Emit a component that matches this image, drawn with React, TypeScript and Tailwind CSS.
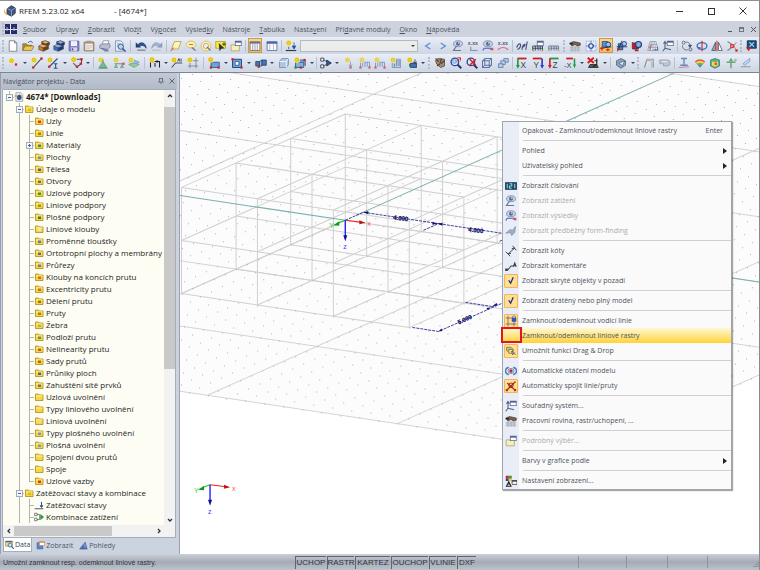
import type { ReactNode } from 'react';
import clsx from 'clsx';

const BLUE = '#2f5597';
const GREY = '#6c7787';
const RED = '#d22020';
const SUN = '#f0cf1c';

const sun = (x = 3.5, y = 3.5) => (
    <g>
        <circle cx={x} cy={y} r="4" fill="#fbf0a0" />
        <circle cx={x} cy={y} r="2.8" fill={SUN} stroke="#b99a10" strokeWidth=".6" />
    </g>
);

const cube = (light: string, mid: string, dark: string) => (
    <g stroke="#3a3a40" strokeWidth=".6">
        <path d="M1 8l6 2v5l-6-2zM5 4V2l5-1 5 2v3" fill={mid} />
        <path d="M7 10l7-2.500V12l-7 3z" fill={dark} />
        <path d="M1 8l5-3 8 2.500L7 10z" fill={light} />
        <path d="M5 3.500 10 5v2L5 5.500zM10 5l5-2v3.500L11 8" fill={dark} />
        <path d="m5 3 5-2 5 2-5 2z" fill={light} />
    </g>
);

const node = (x: number, y: number, color = RED) => <rect x={x - 1.5} y={y - 1.5} width="3" height="3" fill={color} />;

const eye = (y = 6) => (
    <g>
        <ellipse cx="8" cy={y} rx="6" ry="4" fill="#c5d0e2" stroke="#7787a5" />
        <circle cx="8" cy={y} r="2.6" fill="#52699a" />
        <circle cx="9" cy={y - 1} r=".9" fill="#fff" />
    </g>
);

const magnifier = (
    <g fill="none">
        <path d="m10 10 5 5" stroke="#22336e" strokeWidth="2.6" />
        <circle cx="6.5" cy="6.5" r="5" fill="#d9e9fa" stroke="#2e479b" strokeWidth="1.8" />
    </g>
);

const axes = (letter: string, side: string, down: string) => (
    <g>
        <path d="M2 2h12" stroke={side} strokeWidth="2.4" />
        <path d="M2.5 2v9" stroke={down} strokeWidth="2.2" />
        <path d="m0 10.500 2.500 5 2.500-5z" fill={down} />
        <text x="6" y="14" fontSize="11" fill="#3c4452" fontFamily="Liberation Sans, sans-serif">
            {letter}
        </text>
    </g>
);

const folder = (
    <g stroke="#6e6030" strokeWidth=".8">
        <path d="M1 14V5h5l1 2h6v2" fill="#b98c26" />
        <path d="M1 14 4 8h12l-3 6z" fill="#f0c64c" />
        <path d="M8 4c2-3 5-3 6 0" fill="none" stroke="#46536c" strokeWidth="1.300" />
    </g>
);

const windowDialog = (
    <g stroke="#5c6a88" strokeWidth="1">
        <rect x="7" y="1.5" width="8" height="6" fill="#fff" />
        <path d="M7 2.500h8" strokeWidth="2" stroke="#46598c" />
    </g>
);

const beam = (
    <g stroke="#33405e" fill="none">
        <path d="M1 14V8h13v6M4.500 8v6M8 8v6M11 8v6M1 11h13" strokeWidth="1.2" />
        <path d="M1 14h2M13 14h2" stroke="#b9a52c" strokeWidth="2" />
    </g>
);

const icons: Record<string, ReactNode> = {
    newFile: <path d="M3 1h7l3 3v11H3zM10 1v3h3" fill="#fff" stroke="#6d6d74" />,
    open: folder,
    cubeOrange: cube('#f6b765', '#d27a1e', '#6e3d10'),
    cubeBlue: cube('#8fb4f2', '#3e6cc4', '#1d3875'),
    save: (
        <g>
            <path d="M1.500 1.500h13v13h-13z" fill="#8a86cf" stroke="#56539a" />
            <path d="M4 1.500h8V8H4z" fill="#f0f1fa" />
            <path d="M4 10h8v4.500H4z" fill="#d5d6e2" />
            <path d="M5 11h2v3H5z" fill="#56539a" />
        </g>
    ),
    clipboard: (
        <g>
            <rect x="1.5" y="2.5" width="13" height="12" rx="1" fill="#c69b73" stroke="#7d6a5a" />
            <path d="M3 5h10v8.500H3z" fill="#f4f1ec" />
            <path d="M5 1h6v3H5z" fill="#999" />
            <path d="M4 7.500h8M4 9.500h8M4 11.500h6" stroke="#aaa" strokeWidth=".7" />
        </g>
    ),
    print: (
        <g stroke="#686b80" strokeWidth=".8">
            <path d="m4 6 2-5h7l-1 6" fill="#fff" />
            <path d="M1 7 5 5h9l1 4-4 4-10-2z" fill="#b9bdd4" />
            <path d="m3 11 7 1.500 3 2-5 .5z" fill="#8090cf" />
        </g>
    ),
    preview: (
        <g>
            <path d="M2 1h7l3 3v11H2z" fill="#e3edf8" stroke="#7586a4" />
            <path d="M4 5h5M4 7h4M4 9h3" stroke="#7fa1cd" />
            <circle cx="9" cy="9" r="3.5" fill="#b3d5f2" stroke="#39598f" strokeWidth="1.2" />
            <path d="m11.500 11.500 4 4" stroke="#39598f" strokeWidth="2" />
        </g>
    ),
    undo: (
        <g>
            <path d="M4 6c4-4 10-3 11 5-3-4-6-5-9-2" fill={BLUE} stroke="#1f3e79" />
            <path d="M1 3v7h7z" fill="#1f3e79" />
            <path d="M3 13.500h11" stroke="#444" />
        </g>
    ),
    redo: (
        <g>
            <path d="M12 6C8 2 2 3 1 11c3-4 6-5 9-2" fill="#a9b8d2" stroke="#8b9bb9" />
            <path d="M15 3v7H8z" fill="#8b9bb9" />
            <path d="M2 13.500h11" stroke="#aaa" />
        </g>
    ),
    plane: (
        <g>
            <path d="M6 2h9l-4 10H2z" fill="#fcf6b1" stroke="#af963e" />
            <path d="m1 15 4-5" stroke={RED} />
        </g>
    ),
    lasso: (
        <g fill="none">
            <ellipse cx="8" cy="6" rx="6.5" ry="4.5" fill="#fbf3b4" stroke="#c9b250" />
            <path d="M5 6h6" stroke="#c57a48" strokeWidth="1.4" />
            <path d="m9 10 5 4" stroke="#777" strokeWidth="1.5" />
        </g>
    ),
    ring: (
        <g fill="none">
            <circle cx="8" cy="8" r="6.5" stroke="#c9b250" fill="#fdf5b8" />
            <circle cx="8" cy="8" r="3.5" stroke="#c98a50" fill="#eef1f8" />
            <path d="m9 9 5 5" stroke="#777" strokeWidth="1.5" />
        </g>
    ),
    pick: (
        <g>
            <path d="M1 2h13v9H1z" fill="#f7ec3a" stroke="#a99b1a" />
            <path d="m5 4 1 11 2.500-3.500 4-.5z" fill="#333" />
            <path d="M12 3v5M9.500 5.500h5" stroke="#333" strokeWidth="1.2" />
        </g>
    ),
    notes: (
        <g>
            <path d="M1.500 6.500h11v8h-11z" fill="#f5efb4" stroke="#a79f68" />
            {windowDialog}
        </g>
    ),
    table: (
        <g>
            <path d="M1.500 2.500h13v11.500h-13z" fill="#fff" stroke="#5a6174" />
            <path d="M1 3.500h14" stroke="#68718a" strokeWidth="2.5" />
            <path d="M5 4v10M8 4v10M11 4v10" stroke="#7a8297" />
        </g>
    ),
    tableBlue: (
        <g>
            <path d="M1.500 2.500h13v11.500h-13z" fill="#fafbff" stroke="#4d5d88" />
            <path d="M1 3.500h14" stroke="#4d64a5" strokeWidth="3" />
            <path d="M5 4v10M10 4v10" stroke="#8f98ae" strokeWidth=".8" />
        </g>
    ),
    loadCase: (
        <g>
            {sun(5, 4)}
            <path d="M1 14h14" stroke="#333b4c" strokeWidth="1.6" />
            <path d="M12 3v8m-2.500-3 2.500 4 2.500-4z" stroke={BLUE} fill={BLUE} />
            <path d="M5 9v3" stroke="#333b4c" />
        </g>
    ),
    prev: <path d="M11 4 5 8l6 4" fill="none" stroke="#5d94dc" strokeWidth="2" />,
    next: <path d="m5 4 6 4-6 4" fill="none" stroke="#5d94dc" strokeWidth="2" />,
    eyeLoad: (
        <g>
            {eye(5)}
            <path d="m6 8-4 6h10" stroke={GREY} strokeWidth="1.6" fill="none" />
        </g>
    ),
    values: (
        <g>
            <text x="1" y="7" fontSize="7" fontWeight="bold" fill="#555f78" fontFamily="Liberation Sans, sans-serif">
                x.xx
            </text>
            <path d="M5 9v5h9" fill="none" stroke="#8491b0" strokeWidth="1.5" />
        </g>
    ),
    eyeResult: (
        <g>
            {eye(5)}
            <path d="M1 14 3 11h11" stroke="#4c58c6" fill="none" strokeWidth="1.4" />
            <path d="m10 13 5-3v4z" fill="#e04a4a" />
        </g>
    ),
    valuesResult: (
        <g>
            <text x="1" y="7" fontSize="7" fontWeight="bold" fill="#555f78" fontFamily="Liberation Sans, sans-serif">
                x.xx
            </text>
            <path d="M1 13q7-6 14 0" fill="none" stroke="#e06b6b" strokeWidth="1.5" />
        </g>
    ),
    glasses: (
        <g fill="none" stroke="#3e4f7a" strokeWidth="1.5">
            <path d="M1 10c1-4 4-6 5-4s-2 7-4 6M8 13c0-5 3-8 4-7s-3 4-4 3M13 13l2-11" />
        </g>
    ),
    beamDialog: (
        <g>
            {beam}
            {windowDialog}
        </g>
    ),
    beam: <g opacity=".65">{beam}</g>,
    workplane: (
        <g>
            <path d="M1 9h14v6H1z" fill="#dfe3ea" />
            <path d="M1 9.500h14M1 12h14M1 14.500h14M4 9v6M8 9v6M12 9v6" stroke="#8e97a8" strokeWidth=".8" />
            <path d="m1 4 5-2 9 2v3l-4 1-3-2-4 2z" fill="#7a5f4a" stroke="#3c3029" strokeWidth=".8" />
            <path d="M1 4h4v2H1z" fill="#222" />
        </g>
    ),
    snap: (
        <g>
            <path d="M1.500 1.500h13v13h-13z" fill="#e6ebf7" stroke="#8090bd" strokeDasharray="1.5 1.5" />
            <path d="M8 1v14M1 8h14" stroke="#5068b0" />
            <circle cx="8" cy="8" r="3" fill="#dfe8ff" stroke="#2442a0" strokeWidth="1.5" />
        </g>
    ),
    objSnap: (
        <g>
            <path d="M3 2h7v7H3z" fill="#5d92d2" stroke="#23457f" />
            <circle cx="11" cy="6" r="3.2" fill="#9cc6f2" stroke="#23457f" strokeWidth="1.3" />
            <path d="M1 11 15 9" stroke="#1d3468" strokeWidth="1.5" />
            <path d="M0 11h5M2.500 9v5M8 13h5M10.500 11v4" stroke={RED} strokeWidth="1.5" />
        </g>
    ),
    objSnap2: (
        <g>
            <path d="M3 5h6v8H3z" fill="#4e7bb8" stroke="#1c355f" />
            <circle cx="11" cy="5" r="3" fill="#a9cdf2" stroke="#23457f" strokeWidth="1.3" />
            <path d="M2 15 8 1M1 9h14" stroke="#1c355f" strokeWidth="1.2" />
            {node(3, 12)}
        </g>
    ),
    objSnap3: (
        <g>
            <path d="M2 4h8v8H2z" fill="#b7232b" stroke="#1c355f" />
            <circle cx="10" cy="6" r="4" fill="#86aedd" stroke="#1b3a78" strokeWidth="1.5" />
            <path d="M7 12v3M5 14h5M2 3v8" stroke="#b7232b" strokeWidth="1.8" />
        </g>
    ),
    gridTilt: (
        <g>
            <path d="M4 2h8l3 12H1z" fill="#e7ebf2" stroke="#8c95a6" />
            <path d="M8 2v12M3 6h10M2 10h12M6 2 4.500 14M10 2l1.500 12" stroke="#8c95a6" strokeWidth=".8" />
            <path d="M4 13V8h3" stroke={RED} fill="none" />
            <path d="M9 13h5V9" stroke={BLUE} fill="none" />
        </g>
    ),
    coordDialog: (
        <g>
            <path d="M4 3v8l-3 4M4 11l8 2M2 5l2-3 2 3" fill="none" stroke="#566486" strokeWidth="1.5" />
            {windowDialog}
        </g>
    ),
    moveCopy: (
        <g fill="none" stroke="#444c5c">
            <circle cx="3.5" cy="3.5" r="2" />
            <circle cx="12.5" cy="12.5" r="2" />
            <path d="M6 3c4-1 7 2 6 6M2 7c0 5 3 7 7 6" />
            <path d="m10 7 2 3 2-3z" fill="#444c5c" />
        </g>
    ),
    rotate: (
        <g fill="none">
            <ellipse cx="8" cy="8" rx="6.5" ry="4.5" stroke="#3f6fc4" strokeWidth="1.8" />
            <path d="M8 1v14" stroke={RED} strokeWidth="1.4" />
            <path d="m2 9 2 4 3-3z" fill="#3f6fc4" />
        </g>
    ),
    mirror: (
        <g>
            <path d="M6 3v11H1z" fill="#9ca3b2" stroke="#4b5261" />
            <path d="M10 3v11h5z" fill="#fff" stroke="#4b5261" />
            <path d="M8 1v14" stroke={RED} strokeWidth="1.4" />
        </g>
    ),
    connect: (
        <g>
            <path d="m2 2 9 6-9 6" stroke="#7e8799" strokeWidth="1.6" fill="none" />
            <path d="m10 8 4-5M10 8l4 6" stroke="#c58a8a" strokeWidth="1.4" />
            <path d="M6 6h4v4H6z" fill="#e98282" stroke={RED} />
            {node(14, 14)}
        </g>
    ),
    exportX: (
        <g>
            <path d="M3 1h12v10H3z" fill="#1f4c83" stroke="#123" />
            <path d="m6 3 6 6m0-6L6 9" stroke="#8fd0f0" strokeWidth="1.5" />
            <path d="m1 10 4 5 3-5z" fill={RED} />
        </g>
    ),
    addNode: (
        <g>
            {sun(6, 5)}
            {node(12, 10)}
        </g>
    ),
    addLine: (
        <g>
            <path d="M3 14 14 2" stroke="#333b4c" strokeWidth="1.4" />
            {sun(4, 4)}
            {node(3, 14)}
            {node(14, 2)}
        </g>
    ),
    addMember: (
        <g>
            <path d="M3 13 14 2" stroke={BLUE} strokeWidth="1.6" />
            {sun(4, 4)}
            {node(3, 13)}
            <path d="M9 9h5M9 15h5M11.500 9v6" stroke={BLUE} strokeWidth="1.5" />
        </g>
    ),
    addPoly: (
        <g>
            <path d="M7 3h7v6l-6 4-5-5" fill="none" stroke="#444c5c" strokeWidth="1.4" />
            {sun(3.5, 3.5)}
            {node(14, 3)}
            {node(13, 9)}
            {node(8, 13)}
        </g>
    ),
    nodeSupport: (
        <g opacity=".75">
            {sun(5, 4)}
            <path d="m8 6 5 8H3z" fill="#59b06c" stroke="#37794a" />
            <path d="M2 15h12M8 3v4" stroke="#37794a" strokeWidth="1.2" />
        </g>
    ),
    lineSupport: (
        <g opacity=".75">
            {sun(4, 4)}
            <path d="M2 9h12" stroke={GREY} strokeWidth="1.5" />
            <path d="m4 10 2 4H2zM12 10l2 4h-4z" fill="#7bbf88" stroke="#4a8a58" />
            {node(14, 9)}
        </g>
    ),
    surfSupport: (
        <g opacity=".8">
            <path d="M1 7 8 4l7 3-7 4z" fill="#7db6ea" stroke="#5d88b8" />
            <path d="m1 10 7 4 7-4-7-2z" fill="#7fc98a" stroke="#5d9b68" />
            {sun(4, 4)}
        </g>
    ),
    dimension: (
        <g>
            <path d="M2 14V6h12v8M8 8v5" stroke="#222" strokeWidth="1.4" fill="none" />
            <path d="m2 6 4-2v4zM14 6l-4-2v4z" fill="#222" />
            {sun(4, 3.5)}
        </g>
    ),
    comment: (
        <g>
            {sun(4, 4)}
            <path d="m1 14 5-6h9" stroke="#444c5c" fill="none" strokeWidth="1.4" />
            <path d="m9 6 1.500-4L12 6M13.500 2v4" stroke="#333" fill="none" strokeWidth="1.1" />
        </g>
    ),
    guide: (
        <g>
            <path d="M4 1v14M12 1v14M1 5h14M1 12h14" stroke="#6d7687" />
            {sun(4, 4)}
        </g>
    ),
    surface: (
        <g>
            <path d="M4 7h11v7H4z" fill="#6da3dc" stroke="#24487f" />
            {sun(3.5, 3.5)}
            {node(14, 14)}
            {node(4, 14)}
        </g>
    ),
    opening: (
        <g>
            <path d="M2 3h12v11H2z" fill="#6da3dc" stroke="#24487f" strokeWidth="1.3" />
            <path d="M5.500 6h5v5h-5z" fill="#fff" stroke="#24487f" />
            {node(2, 3)}
            {node(14, 14)}
        </g>
    ),
    solid: (
        <g>
            <path d="M1 6h5v6H1zM9 4h6v7H9z" fill="#4778b6" stroke="#1c3864" />
            <path d="m6 6 3-2v8H6z" fill="#9cc4ea" stroke="#1c3864" />
            {node(5, 13)}
        </g>
    ),
    sheet: (
        <g>
            <path d="m2 6 3-4h9v8l-3 4H2z" fill="#b1c6e2" stroke="#7286a8" />
            <path d="M2 6h9l3-4M11 6v8" fill="none" stroke="#fff" />
        </g>
    ),
    solidAdd: (
        <g>
            <path d="M2 7h11v7H2zM5 4h10v8" fill="#7fb0e2" stroke="#24487f" />
            {sun(4, 4)}
            {node(14, 4)}
            {node(9, 14)}
            {node(2, 14, '#2e8b3d')}
        </g>
    ),
    combine: (
        <g fill="none" stroke="#333b4c" strokeWidth="1.2">
            <path d="M1 1.500h4v4H1zM1 10.500h4v4H1zM5 3.500l5 4M5 12.500l5-4" fill="#fff" />
            <path d="m9 4 6 4-6 4z" fill={BLUE} />
        </g>
    ),
    nodalLoad: (
        <g opacity=".65">
            {sun(6, 4)}
            <path d="M10 6v7m-2-3 2 4 2-4" stroke="#5572b5" fill="none" />
            {node(10, 14)}
        </g>
    ),
    memberLoad: (
        <g opacity=".65">
            <path d="M2 14V7h12v7M5 7v6M8 7v6M11 7v6" stroke="#5572b5" fill="none" strokeWidth="1.3" />
            {sun(4, 4)}
            {node(2, 14)}
            {node(14, 14)}
        </g>
    ),
    imperfection: (
        <g opacity=".8">
            <path d="M3 3h11v11H3z" fill="#b8cce8" stroke="#5f7496" />
            <path d="M6 9v4M9 4v8M12 4v8" stroke="#45608f" strokeWidth="1.2" />
            {sun(4, 4)}
        </g>
    ),
    loadGen: (
        <g>
            <path d="M6 8h8v6H6z" fill="#3e6fb4" stroke="#1c3864" />
            <path d="M12 3v5m-2-2 2 3 2-3" stroke="#333" fill="none" />
            <path d="M5 9v4" stroke="#2e8b3d" strokeWidth="2" />
            {sun(5, 4)}
        </g>
    ),
    pan: (
        <g>
            <path d="m2 5 3-3 9 1v9l-5 2-5-4z" fill="#a58970" stroke="#4e4036" />
            <path d="m2 2 4 4M10 2 8 8m6-3-5 4M4 12l4-3" stroke="#4e4036" strokeWidth="1.5" />
        </g>
    ),
    zoomWindow: (
        <g>
            {magnifier}
            <path d="M4 4h4v4H4z" fill="none" stroke="#5e80c4" />
            <path d="M10 1h4v4M13 2l-4 4" fill="none" stroke={RED} strokeWidth="1.2" />
        </g>
    ),
    zoomAll: (
        <g>
            {magnifier}
            <path d="m5 3 8 8M13 3l-8 8" stroke={RED} strokeWidth="2" />
        </g>
    ),
    wireCube: (
        <path d="M2 5h9v9H2zM5 2h9v9H5zM2 5l3-3M11 5l3-3M2 14l3-3M11 14l3-3" fill="none" stroke="#4e679e" strokeWidth="1.2" />
    ),
    cubes: (
        <g fill="#b9cbe8" stroke="#5a71a1">
            <path d="M9 2h6v5H9z" />
            <path d="M5 5h6v5H5z" />
            <path d="M2 9h6v5H2z" />
        </g>
    ),
    viewX: axes('X', RED, '#1f9d3a'),
    viewY: (
        <g>
            <path d="M1 2h12" stroke={RED} strokeWidth="2.4" />
            <path d="M13.500 2v9" stroke="#2a3fc0" strokeWidth="2.2" />
            <path d="m11 10.500 2.500 5 2.500-5z" fill="#2a3fc0" />
            <text x="2" y="14" fontSize="11" fill="#3c4452" fontFamily="Liberation Sans, sans-serif">
                Y
            </text>
        </g>
    ),
    viewZ: axes('Z', '#1f9d3a', RED),
    viewNegX: (
        <g>
            <path d="M14 2v9" stroke="#1f9d3a" strokeWidth="2" />
            <path d="M12 10h4l-2 5z" fill="#1f9d3a" />
            <path d="M3 2h9" stroke={RED} strokeWidth="2.4" />
            <text x="0" y="14" fontSize="10" fill="#3c4452" fontFamily="Liberation Sans, sans-serif">
                -X
            </text>
        </g>
    ),
    hide: (
        <g>
            <path d="M4 10h9l2 4H2z" fill="#555" stroke="#222" />
            <path d="M13 2v8l-5 3M10 5h4" stroke="#222" strokeWidth="1.5" fill="none" />
            <path d="m1 1 8 7m0-7L1 8" stroke="#e01818" strokeWidth="2.6" />
        </g>
    ),
    render: (
        <g>
            <path d="m2 5 6-3 6 3v6l-6 4-6-4z" fill="#8ba3c2" stroke="#4c5c75" />
            <path d="m5 8 5 4 3-7z" fill="#dfe7f1" stroke="#4c5c75" />
        </g>
    ),
    deform: (
        <g fill="none" opacity=".8">
            <path d="M2 14 5 3h9v11" stroke="#8a93a3" strokeWidth="1.3" />
            <path d="M5 4q5 3 9-1" stroke="#c75f5f" />
            <path d="M2 14 5 5M12 14V6" stroke="#3c9a4f" />
        </g>
    ),
    force: (
        <g opacity=".7">
            <path d="M1 4h10a4 4 0 0 1 0 8H6V9H1z" fill="#b5bcc9" stroke="#737c8c" />
            <path d="M4 6h7" stroke="#fff" />
        </g>
    ),
    sectionI: (
        <g>
            <path d="M4 2h8M8 2v9M3 11h10" stroke="#6387c6" strokeWidth="1.8" />
            <path d="m1 14 14-1" stroke="#d65c5c" />
        </g>
    ),
    rainbow: (
        <g>
            <path d="M1 6q7-6 14 0l-7 8z" fill="#e65353" />
            <path d="M2.500 7q5.500-4 11 0L8 13z" fill="#f4dd3e" />
            <path d="M4 9q4-3 8 0l-4 5z" fill="#55bd58" />
            <path d="M5 11q3-2 6 0l-3 3z" fill="#4c8fd8" />
        </g>
    ),
    solidResult: (
        <g>
            <path d="m2 4 6-2 6 2v8l-6 3-6-3z" fill="#5bb86a" stroke="#3a6cb0" />
            <path d="m4 6 4 1 4-1v5l-4 2-4-2z" fill="#f3dc48" />
            <circle cx="9" cy="9" r="2" fill="#e25a3c" />
        </g>
    ),
    reaction: (
        <g>
            <path d="M8 15V6M2 7h12" stroke="#66a86f" strokeWidth="2" />
            <path d="m8 1 3 5H5z" fill="#66a86f" />
            {node(14, 4, '#8dbf94')}
        </g>
    ),
    section: (
        <g>
            <path d="M4 9 13 2v4L6 11z" fill="#c9d9f0" stroke="#6f93cf" />
            <path d="M1 13h13" stroke="#8c95a6" strokeWidth="1.3" />
        </g>
    ),
    numbering: (
        <g>
            <path d="M.5 3.500h15v9H.5z" fill="#1f4a63" stroke="#10293a" />
            <path d="M3 5v6M6 5h3v3H6v3h3M13 5v6" stroke="#8fd3ec" fill="none" strokeWidth="1.4" />
        </g>
    ),
    formFinding: (
        <g opacity=".8">
            <path d="m1 11 6-5 3 1 4-5-1 8-4 4-2-4z" fill="#8d9db8" stroke="#6a7c9a" />
        </g>
    ),
    dims: (
        <g stroke="#3b4350" fill="none" strokeWidth="1.3">
            <path d="M4 12 13 4" />
            <path d="m1 9 6 6M10 1l5 6M4 12l4-1M13 4l-4 1" />
        </g>
    ),
    comments: (
        <g stroke="#3b4350" fill="none" strokeWidth="1.4">
            <path d="M1 13h3l4-5h3" />
            <path d="m11 9 2-5 2 5M12 7.500h2" />
            <path d="M1 12h2v2H1z" fill="#222" />
        </g>
    ),
    check: <path d="m5 7 2.500 4L11 3" fill="none" stroke="#1b2a86" strokeWidth="1.7" />,
    guideLock: (
        <g>
            <path d="M4 1v14M1 4h14M1 12h14M12 8v7" stroke="#6f6656" strokeWidth="1.1" />
            <path d="M9 4h6v5H9z" fill="#2f55b8" />
            <path d="M10 4V2q2-2 4 0v2" fill="none" stroke="#53699c" />
        </g>
    ),
    dragDrop: (
        <g>
            <path d="M2 3h6l3 3v4H5L2 7z" fill="#c9c06c" stroke="#77723e" />
            <path d="M5 6h5v5H5z" fill="#e9e3a0" stroke="#77723e" />
            <path d="m9 8 5 5m-5-5 1 5 3-3" stroke="#333" fill="#fff" />
        </g>
    ),
    autoRotate: (
        <g fill="none">
            <path d="M5 3C-1 5-1 11 5 13M11 3c6 2 6 8 0 10" stroke="#4e7bb8" strokeWidth="2" />
            <ellipse cx="8" cy="8" rx="4" ry="3.5" fill="#cfe0f4" stroke="#5b82bb" />
            <circle cx="8" cy="8" r="2.2" fill={RED} />
        </g>
    ),
    autoConnect: (
        <g fill="none">
            <path d="M2 14 14 2M3 4l11 10" stroke="#b22a1c" strokeWidth="1.7" />
            <circle cx="8" cy="7" r="3" stroke="#7a2a1c" strokeWidth="1.2" />
            {node(2.5, 13.5)}
            {node(13.5, 13.5)}
        </g>
    ),
    displaySettings: (
        <g>
            <path d="M1 1h4v4H1z" fill={RED} />
            <path d="M5 1h4v4H5z" fill="#2e9c3c" />
            <path d="M1 5h4v3H1z" fill="#2a3fc0" />
            <path d="M5 5h4v3H5z" fill={SUN} />
            <path d="M2 15 5 9l3 6zM3 12h4" fill="none" stroke="#222" strokeWidth="1.4" />
            <path d="M9.500 7.500H16v5H9.500z" fill="#fff" stroke="#333" />
            <path d="M9 8h7" stroke="#333" strokeWidth="1.6" />
        </g>
    ),
    appLogo: (
        <g>
            <path d="m4 5 6-4 5 3v7l-5 4-6-3z" fill="#40557f" stroke="#1f2b45" />
            <path d="m4 5 6 2 5-3M10 7v8" fill="none" stroke="#9db0d5" />
            <path d="M1 4c0 5 1 7 4 8l-1 2-4-4 1-6z" fill="#e2b13a" />
        </g>
    ),
    modelDoc: (
        <g>
            <path d="M3 1h8l3 3v11H3z" fill="#e8ecf4" stroke="#7b879f" />
            <path d="m5 6 4-2 3 2v5l-4 2-3-2z" fill="#3c5080" />
            <path d="M1 5h4v3H1z" fill="#cfb04a" />
        </g>
    ),
    loadCases: (
        <g>
            <path d="M1 14h14" stroke="#333" strokeWidth="1.3" />
            <path d="M12 3v8m-2-2 2 3 2-3z" stroke={BLUE} fill={BLUE} strokeWidth="1.6" />
        </g>
    ),
    loadCombos: (
        <g fill="none" stroke="#444">
            <path d="M1 2h4v4H1zM1 10h4v4H1zM5 4h4v8H5" />
            <path d="m10 3 6 5-6 5z" fill="#1f9d3a" stroke="none" />
        </g>
    ),
    tabData: (
        <g>
            <path d="M1 2h12v9H1z" fill="#f2dc86" stroke="#8d7a2d" />
            <path d="M1 3h12" stroke={BLUE} strokeWidth="2" />
            <circle cx="9" cy="9" r="3.5" fill="#cfe2f8" stroke={BLUE} strokeWidth="1.3" />
            <path d="m11.500 11.500 4 4" stroke={BLUE} strokeWidth="2" />
        </g>
    ),
    tabShow: (
        <g>
            <path d="M2 3h10v11H2z" fill="#5a86c8" stroke="#2f5597" />
            <path d="M6 1h9v7H6z" fill="#fff" stroke="#c97f3a" />
            <path d="M6 2h9" stroke="#c97f3a" strokeWidth="2" />
        </g>
    ),
    tabViews: (
        <g>
            <path d="M2 13 11 2l3 11z" fill="#6a93d2" stroke="#2f5597" />
            <path d="M1 14h14M7 8v5" stroke="#2f3f77" strokeWidth="1.4" />
        </g>
    ),
};

interface IconProps {
    name: string;
    className?: string;
}

function Icon({ name, className = 'size-3.5' }: IconProps) {
    return (
        <svg viewBox="0 0 16 16" className={clsx('shrink-0', className)} aria-hidden="true">
            {icons[name]}
        </svg>
    );
}

interface ToolGroupProps {
    items: string;
    className: string;
    active?: string;
}

// Items are icon names; "v" stands for the small drop-down arrow
function ToolGroup({ items, className, active }: ToolGroupProps) {
    return (
        <div className={clsx('flex h-full shrink-0 items-center justify-between', className)}>
            {items.split(' ').map((name, i) =>
                name === 'v' ? (
                    <button key={i} aria-label="More" className="flex w-[5px] justify-center">
                        <svg viewBox="0 0 4 2" className="h-[2px] w-1">
                            <path d="M0 0h4L2 2z" fill="#3c4352" />
                        </svg>
                    </button>
                ) : (
                    <button
                        key={i}
                        aria-label={name}
                        className={clsx(
                            'flex h-[15px] w-3.5 items-center justify-center',
                            name === active && 'bg-gradient-to-b from-[#fbd79a] to-[#f8b84e] outline outline-1 -outline-offset-1 outline-[#c99a4e]'
                        )}
                    >
                        <Icon name={name} className="size-3" />
                    </button>
                )
            )}
        </div>
    );
}

function Sep({ className = 'mx-[2px]' }: { className?: string }) {
    return <div className={clsx('h-3 w-px shrink-0 bg-[#b9c1d0]', className)} />;
}

function Grip({ className = 'mx-[2px]' }: { className?: string }) {
    return <div className={clsx('h-3 w-[3px] shrink-0 border-l-2 border-dotted border-[#b3bccb]', className)} />;
}

function TitleBar() {
    return (
        <header className="flex h-[21px] items-center border-t border-[#8f8f8f] bg-white pl-1 text-[8px] text-[#1c1c1c]">
            <Icon name="appLogo" className="size-3" />
            <h1 className="ml-[3px] w-[95px]">RFEM 5.23.02 x64</h1>
            <span>- [4674*]</span>
            <div className="ml-auto flex items-center">
                <button aria-label="Minimize" className="flex w-8 justify-center">
                    <span className="h-px w-[7px] bg-[#333]" />
                </button>
                <button aria-label="Maximize" className="flex w-8 justify-center">
                    <span className="size-[7px] border border-[#333]" />
                </button>
                <button aria-label="Close" className="flex w-8 justify-center">
                    <svg viewBox="0 0 8 8" className="size-2">
                        <path d="m.5.5 7 7m0-7-7 7" stroke="#333" />
                    </svg>
                </button>
            </div>
        </header>
    );
}

// An underscore marks the access key
const menus = [
    '_Soubor',
    'Úpra_vy',
    '_Zobrazit',
    'Vlož_it',
    'Vý_počet',
    'Výsled_ky',
    'Nástroje',
    '_Tabulka',
    'Nasta_vení',
    'Pří_davné moduly',
    '_Okno',
    '_Nápověda',
];

function MenuBar() {
    return (
        <nav className="flex h-4 items-center bg-[#cdd2de] pl-[2px] text-[7px] text-[#4b5260]">
            <Grip className="" />
            <svg viewBox="0 0 12 10" className="h-[10px] w-3">
                <path d="M0 0h12v10H0z" fill="#252f66" />
                <path d="M0 5.500h12M5.500 0v10" stroke="#e6e9f4" />
                <path d="M2 3v4M9 3v4" stroke="#b9c1de" />
            </svg>
            <div className="ml-[6px] flex gap-[9px]">
                {menus.map((label) => {
                    const at = label.indexOf('_');
                    return (
                        <button key={label}>
                            {at < 0 ? (
                                label
                            ) : (
                                <>
                                    {label.slice(0, at)}
                                    <span className="underline underline-offset-1">{label[at + 1]}</span>
                                    {label.slice(at + 2)}
                                </>
                            )}
                        </button>
                    );
                })}
            </div>
            <div className="ml-auto flex items-center gap-[7px] pr-[3px]">
                <button aria-label="Minimize document" className="mt-1 h-px w-1 bg-[#555]" />
                <button aria-label="Restore document" className="size-[5px] border border-t-2 border-[#777]" />
                <button aria-label="Close document">
                    <svg viewBox="0 0 5 5" className="size-[5px]">
                        <path d="m0 0 5 5m0-5L0 5" stroke="#555" />
                    </svg>
                </button>
            </div>
        </nav>
    );
}

function Toolbars() {
    const bar = 'flex h-[17px] items-center bg-gradient-to-b from-[#e9eef7] to-[#ced6e4] pl-[2px]';
    return (
        <div className="border-b border-[#7c8492] bg-[#d3dae7] pb-px">
            <div className={bar}>
                <Grip className="mr-px" />
                <ToolGroup className="w-[121px]" items="newFile open cubeOrange cubeBlue save clipboard print preview" />
                <Sep className="mx-[3px]" />
                <ToolGroup className="w-[30px]" items="undo redo" />
                <Sep />
                <ToolGroup className="w-[74px]" items="plane lasso ring pick notes" />
                <Sep />
                <ToolGroup className="w-[31px]" items="table tableBlue" active="table" />
                <Sep />
                <ToolGroup className="w-[14px]" items="loadCase" />
                <div className="relative ml-[2px] w-[118px] shrink-0">
                    <select
                        aria-label="Load case"
                        className="block h-3 w-full appearance-none border border-[#b5b9c0] bg-[#ececec] text-[8px]"
                    >
                        <option></option>
                    </select>
                    <svg viewBox="0 0 4 2" className="pointer-events-none absolute top-[5px] right-[3px] h-[2px] w-1">
                        <path d="M0 0h4L2 2z" fill="#3c4352" />
                    </svg>
                </div>
                <ToolGroup className="ml-[3px] w-[89px]" items="prev next eyeLoad values eyeResult valuesResult" />
                <Sep />
                <ToolGroup className="w-[46px]" items="glasses beamDialog beam" />
                <Grip />
                <ToolGroup
                    className="w-[107px]"
                    items="workplane snap objSnap objSnap2 objSnap3 gridTilt coordDialog"
                    active="objSnap"
                />
                <Sep />
                <ToolGroup className="w-[59px]" items="moveCopy rotate mirror connect" />
                <Grip className="mx-px" />
                <ToolGroup className="w-[14px]" items="exportX" />
            </div>
            <div className={bar}>
                <Grip className="mr-px" />
                <ToolGroup className="w-[85px]" items="addNode v addLine addMember v addPoly v" />
                <Sep />
                <ToolGroup className="w-[45px]" items="nodeSupport lineSupport surfSupport" />
                <Sep className="mx-[3px]" />
                <ToolGroup className="w-[52px]" items="dimension v comment guide" />
                <Sep className="mx-[3px]" />
                <ToolGroup className="w-[107px]" items="surface v opening v solid v sheet solidAdd v" />
                <Sep />
                <ToolGroup
                    className="w-[107px]"
                    items="combine v nodalLoad memberLoad memberLoad imperfection loadGen v"
                />
                <Grip />
                <ToolGroup className="w-[77px]" items="pan zoomWindow zoomAll wireCube cubes" />
                <Sep />
                <ToolGroup className="w-[92px]" items="viewX viewY viewZ viewNegX v hide v" />
                <Sep className="mx-[3px]" />
                <ToolGroup className="w-[21px]" items="render v" />
                <Grip />
                <ToolGroup className="w-[30px]" items="deform force" />
                <Sep />
                <ToolGroup className="w-[76px]" items="sectionI rainbow solidResult reaction section" />
            </div>
        </div>
    );
}

interface TreeItem {
    label: string;
    icon?: string;
    mark?: string;
}

const modelData: TreeItem[] = [
    { label: 'Uzly', mark: '#d22020' },
    { label: 'Linie', mark: '#a07010' },
    { label: 'Materiály', mark: '#2e7d5b' },
    { label: 'Plochy', mark: '#4c86c8' },
    { label: 'Tělesa', mark: '#2f5597' },
    { label: 'Otvory', mark: '#57606e' },
    { label: 'Uzlové podpory', mark: '#1f8a3a' },
    { label: 'Liniové podpory', mark: '#8a8a1e' },
    { label: 'Plošné podpory', mark: '#1f6a3a' },
    { label: 'Liniové klouby', mark: '#e8e8f4' },
    { label: 'Proměnné tloušťky', mark: '#3d6fb4' },
    { label: 'Ortotropní plochy a membrány', mark: '#5a4fa8' },
    { label: 'Průřezy', mark: '#6a62b8' },
    { label: 'Klouby na koncích prutu', mark: '#c05a20' },
    { label: 'Excentricity prutu', mark: '#c05a20' },
    { label: 'Dělení prutu', mark: '#8a6a10' },
    { label: 'Pruty', mark: '#a07010' },
    { label: 'Žebra', mark: '#a9a58a' },
    { label: 'Podloží prutu', mark: '#4a8a4a' },
    { label: 'Nelinearity prutu', mark: '#c04a20' },
    { label: 'Sady prutů', mark: '#a05010' },
    { label: 'Průniky ploch', mark: '#2f5597' },
    { label: 'Zahuštění sítě prvků', mark: '#57606e' },
    { label: 'Uzlová uvolnění' },
    { label: 'Typy liniového uvolnění' },
    { label: 'Liniová uvolnění', mark: '#e8d9a0' },
    { label: 'Typy plošného uvolnění', mark: '#5b8fd0' },
    { label: 'Plošná uvolnění', mark: '#5b8fd0' },
    { label: 'Spojení dvou prutů' },
    { label: 'Spoje' },
    { label: 'Uzlové vazby', mark: '#d22020' },
];

const loadData: TreeItem[] = [
    { label: 'Zatěžovací stavy', icon: 'loadCases' },
    { label: 'Kombinace zatížení', icon: 'loadCombos' },
];

function FolderIcon({ mark }: { mark?: string }) {
    return (
        <svg viewBox="0 0 10 10" className="size-[10px] shrink-0" aria-hidden="true">
            <path d="M1.500 2h3l1 1h3.500v5.500H1.500z" fill="#f7d73c" stroke="#ac8c18" strokeWidth=".8" />
            <path d="M2 4h6.500" stroke="#fff3a6" />
            {mark && <path d="M4 4.500h3v2.500H4z" fill={mark} opacity=".85" />}
        </svg>
    );
}

// 10x12 cell of the connector lines; d is the path of the guide
function Guide({ d }: { d?: string }) {
    return (
        <svg viewBox="0 0 10 12" className="h-3 w-[10px] shrink-0" shapeRendering="crispEdges" aria-hidden="true">
            {d && <path d={d} fill="none" stroke="#b4b4ae" />}
        </svg>
    );
}

function Expander({ open, first }: { open: boolean; first?: boolean }) {
    return (
        <button aria-label={open ? 'Collapse' : 'Expand'} className="shrink-0">
            <svg viewBox="0 0 10 12" className="h-3 w-[10px]" shapeRendering="crispEdges">
                <path d={first ? 'M5.500 0v3M8 6.500h2' : 'M5.500 0v12M8 6.500h2'} stroke="#b4b4ae" />
                <rect x="2.5" y="3.5" width="6" height="6" fill="#f4f6fb" stroke="#a3acbd" />
                <path d={open ? 'M4 6.500h3' : 'M4 6.500h3M5.500 5v3'} stroke="#4c66ac" />
            </svg>
        </button>
    );
}

const LINE = 'M5.500 0v12';
const TEE = 'M5.500 0v12M5.500 6.500H10';
const ELBOW = 'M5.500 0v7M5.500 6.500H10';

function TreeRows({ items, closed }: { items: TreeItem[]; closed: boolean }) {
    return (
        <ul>
            {items.map((item, i) => (
                <li key={item.label} className="flex h-3 items-center">
                    <Guide />
                    <Guide d={LINE} />
                    {item.label === 'Materiály' ? (
                        <Expander open={false} />
                    ) : (
                        <Guide d={closed && i === items.length - 1 ? ELBOW : TEE} />
                    )}
                    {item.icon ? <Icon name={item.icon} className="size-[10px]" /> : <FolderIcon mark={item.mark} />}
                    <span className="ml-[2px]">{item.label}</span>
                </li>
            ))}
        </ul>
    );
}

function Chevron({ d, label }: { d: string; label: string }) {
    return (
        <button aria-label={label} className="flex size-[11px] shrink-0 items-center justify-center">
            <svg viewBox="0 0 6 6" className="size-[6px]">
                <path d={d} fill="none" stroke="#333" strokeWidth="1.3" />
            </svg>
        </button>
    );
}

function Navigator() {
    return (
        <aside className="flex w-[179px] shrink-0 flex-col border-l border-[#98a0ae] bg-[#ccd3e0] pr-[2px]">
            <div className="flex h-[16px] items-center bg-gradient-to-b from-[#c3cad6] to-[#b2bac8] pr-[2px] pl-[2px] text-[7px] text-[#454c59]">
                <h2>Navigátor projektu - Data</h2>
                <button aria-label="Auto hide" className="ml-auto">
                    <svg viewBox="0 0 6 6" className="size-[6px]">
                        <path d="M1.500 0v4M4.500 0v4M1 .5h4M0 4h6M3 4v2" stroke="#666" strokeWidth=".8" />
                    </svg>
                </button>
                <button aria-label="Close panel" className="ml-[5px]">
                    <svg viewBox="0 0 6 6" className="size-[6px]">
                        <path d="m.5.500 5 5m0-5-5 5" stroke="#666" />
                    </svg>
                </button>
            </div>
            <div className="mx-px flex min-h-0 flex-1 flex-col border border-[#a5adbb] bg-[#fdfdf4]">
                <div className="flex min-h-0 flex-1">
                    <div className="min-w-0 flex-1 overflow-hidden pt-px pl-px text-[8px] whitespace-nowrap text-[#1e1e1e]">
                        <div className="flex h-3 items-center font-bold">
                            <Expander open first />
                            <Icon name="modelDoc" className="size-[10px]" />
                            <span className="ml-[2px]">4674* [Downloads]</span>
                        </div>
                        <div className="flex h-3 items-center">
                            <Guide />
                            <Expander open />
                            <FolderIcon mark="#d9b31c" />
                            <span className="ml-[2px]">Údaje o modelu</span>
                        </div>
                        <TreeRows items={modelData} closed />
                        <div className="flex h-3 items-center">
                            <Guide />
                            <Expander open />
                            <FolderIcon mark="#d9b31c" />
                            <span className="ml-[2px]">Zatěžovací stavy a kombinace</span>
                        </div>
                        <TreeRows items={loadData} closed={false} />
                    </div>
                    <div className="flex w-[11px] flex-col items-center bg-[#f2f2f2]">
                        <Chevron label="Scroll up" d="m1 4 2-2 2 2" />
                        <div className="mt-[6px] w-full grow-[261] bg-[#c9c9c9]" />
                        <div className="grow-[145]" />
                        <Chevron label="Scroll down" d="m1 2 2 2 2-2" />
                    </div>
                </div>
                <div className="flex h-3 items-center bg-[#f2f2f2] pr-[11px]">
                    <Chevron label="Scroll left" d="M4 1 2 3l2 2" />
                    <div className="h-[10px] grow-[97] bg-[#c9c9c9]" />
                    <div className="grow-[41]" />
                    <Chevron label="Scroll right" d="m2 1 2 2-2 2" />
                </div>
            </div>
            <div className="flex h-[16px] items-start pl-[2px] text-[7px] text-[#4b5568]">
                <button className="flex h-[14px] items-center gap-px border border-t-0 border-[#a5adbb] bg-white px-px text-[#33415c]">
                    <Icon name="tabData" className="size-[9px]" />
                    Data
                </button>
                <button className="ml-1 flex h-[14px] items-center gap-px">
                    <Icon name="tabShow" className="size-[9px]" />
                    Zobrazit
                </button>
                <button className="ml-[6px] flex h-[14px] items-center gap-px">
                    <Icon name="tabViews" className="size-[9px]" />
                    Pohledy
                </button>
            </div>
        </aside>
    );
}

// One metre along each model axis, projected to the screen
const OX = 345;
const OY = 220;
const project = (x: number, y: number, z = 0): [number, number] => [
    OX + x * 18.95 + y * 10.9,
    OY + x * 2.83 - y * 4.88 - z * 53,
];

const segment = (a: [number, number, number?], b: [number, number, number?]) =>
    `M${project(...a).join(' ')}L${project(...b).join(' ')}`;

const range = (from: number, to: number, step = 1) =>
    Array.from({ length: Math.floor((to - from) / step) + 1 }, (_, i) => from + i * step);

const gridDots = range(-30, 30)
    .flatMap((x) => range(-30, 30).map((y) => project(x, y)))
    .filter(([px, py]) => px > 178 && px < 762 && py > 72 && py < 560)
    .map(([px, py]) => `M${Math.round(px)} ${Math.round(py)}h1`)
    .join('');

const gridLines = [-30, -20, -10, 10, 20, 30]
    .map((n) => segment([n, -30], [n, 30]) + segment([-30, n], [30, n]))
    .join('');

const frameX = [0, 4, 8, 12];
const frameY = [-15, -10, -5, 0];
const frame = [
    ...[0, 1, 2].flatMap((z) => [
        ...frameX.map((x) => segment([x, -15, z], [x, 0, z])),
        ...frameY.map((y) => segment([0, y, z], [12, y, z])),
    ]),
    ...frameX.flatMap((x) => frameY.map((y) => segment([x, y, 0], [x, y, 2]))),
].join('');

function Triad({ x, y }: { x: number; y: number }) {
    return (
        <g transform={`translate(${x} ${y})`} fontSize="7" fontFamily="Liberation Sans, sans-serif">
            <path d="m0 0 16 2" stroke="#ff1a1a" />
            <path d="m14 0 6 2.500-6 1.500z" fill="#c01010" />
            <path d="m0 0-8 3" stroke="#12d012" />
            <path d="m-6 1-6 4 6 .5z" fill="#109a10" />
            <path d="M0 0v17" stroke="#2020ff" strokeWidth="1.4" />
            <path d="M-2 15h4l-2 6z" fill="#101090" />
            <text x="22" y="6" fill="#ff5050">x</text>
            <text x="-16" y="8" fill="#30d030">Y</text>
            <text x="-2" y="29" fill="#4040ff">z</text>
        </g>
    );
}

function Viewport() {
    return (
        <main className="min-w-0 flex-1 border-l border-[#9aa2b0] bg-white">
            <svg viewBox="180 73 578 481" preserveAspectRatio="xMinYMin slice" className="block h-full w-full">
                <path
                    d={`M${project(-30, -30)}L${project(30, -30)}L${project(30, 30)}L${project(-30, 30)}z`}
                    fill="#fcfcfc"
                />
                <path d={gridLines} stroke="#d4d4d4" fill="none" />
                <path d={segment([0, 0], [30, 0]) + segment([0, -30], [0, 0])} stroke="#d4d4d4" />
                <path d={frame} stroke="#d0d0d0" fill="none" />
                <path
                    d={segment([-30, 0], [0, 0]) + segment([12, 0], [30, 0]) + segment([0, 1], [0, 30])}
                    stroke="#78afaf"
                />
                <path d={gridDots} stroke="#b0b0b0" transform="translate(0 .5)" />
                <g stroke="#2a2a90" strokeWidth=".9" strokeDasharray="3 1" fill="none">
                    <path d="m345 220 18-8 145 22M423 230l16-7M499 241l9-4M412 327l26 4 70-31M465 302l26 4" />
                </g>
                <g fill="#101070">
                    <path d="m363 212 5-1v3zM437 223.500l-5-2v3zM437 223.500l5-1v3zM438 331l3-3 1 2.500zM490 307l-4 .5 1 2z" />
                    <path d="m490 307 6-4.500 1 2z" />
                </g>
                <g
                    fontSize="6"
                    fontWeight="bold"
                    fill="#0a0a60"
                    stroke="#0a0a60"
                    strokeWidth=".2"
                    textAnchor="middle"
                    fontFamily="Liberation Sans, sans-serif"
                >
                    <text transform="translate(400 220) rotate(8)">4.000</text>
                    <text transform="translate(475 232) rotate(8)">4.000</text>
                    <text transform="translate(465 321) rotate(-24)">5.000</text>
                </g>
                <Triad x={345} y={220} />
                <Triad x={210} y={484} />
            </svg>
        </main>
    );
}

interface MenuItem {
    label: string;
    icon?: string;
    checked?: boolean;
    disabled?: boolean;
    submenu?: boolean;
    hint?: string;
    current?: boolean;
}

const contextGroups: MenuItem[][] = [
    [{ label: 'Opakovat - Zamknout/odemknout liniové rastry', hint: 'Enter' }],
    [
        { label: 'Pohled', submenu: true },
        { label: 'Uživatelský pohled', submenu: true },
    ],
    [
        { label: 'Zobrazit číslování', icon: 'numbering' },
        { label: 'Zobrazit zatížení', icon: 'eyeLoad', disabled: true },
        { label: 'Zobrazit výsledky', icon: 'eyeResult', disabled: true },
        { label: 'Zobrazit předběžný form-finding', icon: 'formFinding', disabled: true },
    ],
    [
        { label: 'Zobrazit kóty', icon: 'dims' },
        { label: 'Zobrazit komentáře', icon: 'comments' },
        { label: 'Zobrazit skryté objekty v pozadí', icon: 'check', checked: true },
    ],
    [{ label: 'Zobrazit drátěný nebo plný model', icon: 'check', checked: true }],
    [
        { label: 'Zamknout/odemknout vodicí linie', icon: 'guideLock', checked: true },
        { label: 'Zamknout/odemknout liniové rastry', current: true },
        { label: 'Umožnit funkci Drag & Drop', icon: 'dragDrop', checked: true },
    ],
    [
        { label: 'Automatické otáčení modelu', icon: 'autoRotate' },
        { label: 'Automaticky spojit linie/pruty', icon: 'autoConnect', checked: true },
    ],
    [
        { label: 'Souřadný systém...', icon: 'coordDialog' },
        { label: 'Pracovní rovina, rastr/uchopení, ...', icon: 'workplane' },
    ],
    [{ label: 'Podrobný výběr...', icon: 'notes', disabled: true }],
    [{ label: 'Barvy v grafice podle', submenu: true }],
    [{ label: 'Nastavení zobrazení...', icon: 'displaySettings' }],
];

function ContextMenu() {
    return (
        <div
            role="menu"
            className="absolute top-[121px] left-[502px] w-[230px] border border-[#a0a4ab] bg-[#fafafa] bg-gradient-to-r from-[#e9edf7] from-[16px] to-[#fafafa] to-[16px] py-px text-[7px] text-[#4c5260] shadow-[1px_1px_1px_rgba(0,0,0,0.35)]"
        >
            {contextGroups.map((group, g) => (
                <div key={g}>
                    {g > 0 && (
                        <div className="flex h-[5px] items-center pl-5">
                            <div className="h-px w-full bg-[#d0d0d2]" />
                        </div>
                    )}
                    {group.map((item) => (
                        <button
                            key={item.label}
                            role="menuitem"
                            disabled={item.disabled}
                            className={clsx(
                                'relative flex h-[15px] w-full items-center pr-2 text-left',
                                item.disabled && 'text-[#a9abb0]',
                                item.current && 'bg-gradient-to-b from-[#fff8d6] via-[#ffe583] to-[#ffd32e]'
                            )}
                        >
                            <span
                                className={clsx(
                                    'ml-px flex size-[14px] items-center justify-center',
                                    item.checked && 'rounded-[1px] border border-[#f3b45c] bg-[#ffdf94]'
                                )}
                            >
                                {item.icon && <Icon name={item.icon} className="size-3" />}
                            </span>
                            {item.current && (
                                <span className="absolute -top-px -left-[2px] h-4 w-[21px] border-2 border-[#e8141c]" />
                            )}
                            <span className="ml-1">{item.label}</span>
                            {item.hint && <span className="ml-auto">{item.hint}</span>}
                            {item.submenu && (
                                <svg viewBox="0 0 4 6" className="-mr-1 ml-auto h-[6px] w-1">
                                    <path d="M0 0v6l4-3z" fill="#222" />
                                </svg>
                            )}
                        </button>
                    ))}
                </div>
            ))}
        </div>
    );
}

const modes = [
    { label: 'UCHOP', width: 'w-[31px]' },
    { label: 'RASTR', width: 'w-[27px]' },
    { label: 'KARTEZ', width: 'w-[35px]' },
    { label: 'OUCHOP', width: 'w-[37px]' },
    { label: 'VLINIE', width: 'w-[27px]' },
    { label: 'DXF', width: 'w-[19px]' },
];

function StatusBar() {
    return (
        <footer className="flex h-[16px] items-center bg-gradient-to-b from-[#ccd0d7] via-[#a5abb6] to-[#bcc1ca] font-['Liberation_Sans',sans-serif] text-[#2f3540]">
            <p className="w-[295px] pl-[3px] text-[7px]">Umožní zamknout resp. odemknout liniové rastry.</p>
            <div className="flex gap-px text-[8px]">
                {modes.map(({ label, width }) => (
                    <button
                        key={label}
                        className={clsx('flex h-[13px] items-center justify-center border-t border-l border-[#5f6671]', width)}
                    >
                        {label}
                    </button>
                ))}
            </div>
            <div className="ml-auto flex h-3">
                <div className="w-12 border-l border-[#8d94a0]" />
                <div className="w-[41px] border-l border-[#8d94a0]" />
                <div className="w-10 border-l border-[#8d94a0]" />
                <div className="flex w-[52px] items-end justify-end border-l border-[#8d94a0]">
                    <svg viewBox="0 0 6 6" className="size-[6px]">
                        <path d="M5 0v6M3 2v4M1 4v2" stroke="#6b727e" strokeDasharray="1 1" />
                    </svg>
                </div>
            </div>
        </footer>
    );
}

export default function App() {
    return (
        <div className="relative flex h-screen flex-col overflow-hidden border-r border-[#8a8a8a] bg-[#ccd3e0] font-['Open_Sans',sans-serif] leading-none">
            <TitleBar />
            <MenuBar />
            <Toolbars />
            <div className="flex min-h-0 flex-1">
                <Navigator />
                <Viewport />
            </div>
            <StatusBar />
            <ContextMenu />
        </div>
    );
}
